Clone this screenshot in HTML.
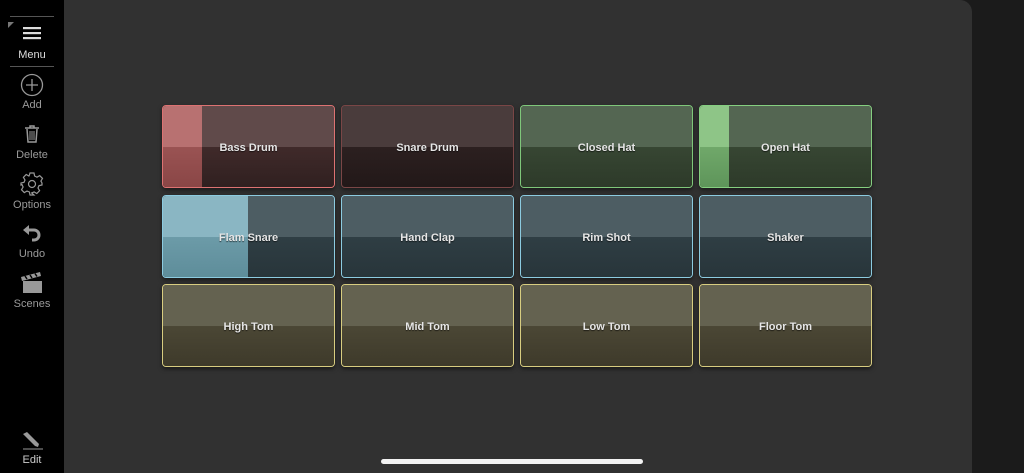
<!DOCTYPE html>
<html><head><meta charset="utf-8"><style>
*{margin:0;padding:0;box-sizing:border-box}
body{width:1024px;height:473px;background:#1b1b1b;position:relative;overflow:hidden;font-family:"Liberation Sans",sans-serif}
#side{position:absolute;left:0;top:0;width:64px;height:473px;background:#000}
#panel{position:absolute;left:64px;top:0;width:908px;height:473px;background:#313131;border-top-right-radius:12px}
.it{position:absolute;left:0;width:64px;text-align:center;color:#9a9a9a;font-size:11px}
.it svg{display:block;margin:0 auto}
.pad{position:absolute;width:173px;height:83px;border-radius:4px;border:1.5px solid;overflow:hidden;box-shadow:0 2px 4px rgba(0,0,0,.5)}
.pad .t{position:absolute;left:0;top:0;right:0;height:50%}
.pad .b{position:absolute;left:0;bottom:0;right:0;height:50%}
.pad .f{position:absolute;left:0;top:0;bottom:0}
.pad .f i{position:absolute;left:0;right:0;height:50%}
.pad span{position:absolute;left:0;right:0;top:36px;text-align:center;color:#e6e6e6;font-weight:bold;font-size:11px;text-shadow:0 1px 1px rgba(0,0,0,.6)}
.hl{position:absolute;left:10px;width:44px;height:1px;background:#555}
</style></head><body>
<div id="side">
<div class="hl" style="top:16px"></div>
<div style="position:absolute;left:8px;top:22px;width:0;height:0;border-top:6px solid #777;border-right:6px solid transparent"></div>
<div class="it" style="top:26px;color:#ddd"><svg width="18" height="14"><rect x="0" y="1" width="18" height="2.2" fill="#ddd"/><rect x="0" y="6" width="18" height="2.2" fill="#ddd"/><rect x="0" y="11" width="18" height="2.2" fill="#ddd"/></svg><div style="margin-top:9px">Menu</div></div>
<div class="hl" style="top:66px"></div>
<div class="it" style="top:73px"><svg width="24" height="24"><circle cx="12" cy="12" r="10.5" fill="none" stroke="#999" stroke-width="1.3"/><path d="M12 6v12M6 12h12" stroke="#999" stroke-width="1.3"/></svg><div style="margin-top:2px">Add</div></div>
<div class="it" style="top:124px"><svg width="16" height="20"><path d="M1 4h14M6 4V2h4v2M3 5l1 13h8l1-13" fill="none" stroke="#999" stroke-width="1.5"/><path d="M6 7v9M8 7v9M10 7v9" stroke="#999" stroke-width="1"/></svg><div style="margin-top:5px">Delete</div></div>
<div class="it" style="top:172px"><svg width="24" height="24" viewBox="0 0 24 24"><path d="M10 1h4l.6 3 2.4 1.2 2.7-1.6 2.8 2.8-1.6 2.7L22 11v2l-3 .6-1 2.4 1.6 2.7-2.8 2.8-2.7-1.6-2.4 1L14 23h-4l-.6-3-2.4-1-2.7 1.6-2.8-2.8L3.1 15 2 12.6 1 13v-2l3-.6 1-2.4-1.6-2.7 2.8-2.8L8.9 4 9.4 3z" fill="none" stroke="#999" stroke-width="1.2"/><circle cx="12" cy="12" r="3.5" fill="none" stroke="#999" stroke-width="1.2"/></svg><div style="margin-top:3px">Options</div></div>
<div class="it" style="top:225px"><svg width="20" height="18"><path d="M6 5h6a5 5 0 0 1 0 10h-2" fill="none" stroke="#999" stroke-width="3"/><path d="M1 5l6-5v10z" fill="#999"/></svg><div style="margin-top:5px">Undo</div></div>
<div class="it" style="top:272px"><svg width="24" height="22"><path d="M3 9h19v12H3z" fill="#999"/><path d="M1 5l19-5 1 4L2 9z" fill="#999"/><path d="M5 4l2 3M10 3l2 3M15 1.5l2 3" stroke="#000" stroke-width="1.5"/></svg><div style="margin-top:4px">Scenes</div></div>
<div class="it" style="top:430px"><svg width="22" height="20"><path d="M4 2l12 12-1 3-3-1L0 4z" fill="#999" transform="translate(2,0)"/><path d="M2 19h20" stroke="#999" stroke-width="1"/></svg><div style="margin-top:4px;color:#ccc">Edit</div></div>
</div>
<div id="panel"></div>

<div class="pad" style="left:162px;top:105px;border-color:#dd7272"><div class="t" style="background:#604a4a"></div><div class="b" style="background:linear-gradient(#402a2a,#302020)"></div><div class="f" style="width:39px"><i style="top:0;background:#b87171"></i><i style="bottom:0;background:linear-gradient(#9a5353,#8a4646)"></i></div><span>Bass Drum</span></div>
<div class="pad" style="left:341px;top:105px;border-color:#7a4646"><div class="t" style="background:#4a3c3c"></div><div class="b" style="background:linear-gradient(#2c2020,#221818)"></div><span>Snare Drum</span></div>
<div class="pad" style="left:520px;top:105px;border-color:#7fc77a"><div class="t" style="background:#546652"></div><div class="b" style="background:linear-gradient(#374633,#2d3a29)"></div><span>Closed Hat</span></div>
<div class="pad" style="left:699px;top:105px;border-color:#85cf80"><div class="t" style="background:#546652"></div><div class="b" style="background:linear-gradient(#374633,#2d3a29)"></div><div class="f" style="width:29px"><i style="top:0;background:#8ec587"></i><i style="bottom:0;background:linear-gradient(#70a86a,#5e955a)"></i></div><span>Open Hat</span></div>

<div class="pad" style="left:162px;top:195px;border-color:#8ccbe0"><div class="t" style="background:#4d5d63"></div><div class="b" style="background:linear-gradient(#2f3e44,#28353a)"></div><div class="f" style="width:85px"><i style="top:0;background:#8ab6c3"></i><i style="bottom:0;background:linear-gradient(#6c9ba8,#5e8d9a)"></i></div><span>Flam Snare</span></div>
<div class="pad" style="left:341px;top:195px;border-color:#8ccbe0"><div class="t" style="background:#4d5d63"></div><div class="b" style="background:linear-gradient(#2f3e44,#28353a)"></div><span>Hand Clap</span></div>
<div class="pad" style="left:520px;top:195px;border-color:#8ccbe0"><div class="t" style="background:#4d5d63"></div><div class="b" style="background:linear-gradient(#2f3e44,#28353a)"></div><span>Rim Shot</span></div>
<div class="pad" style="left:699px;top:195px;border-color:#8ccbe0"><div class="t" style="background:#4d5d63"></div><div class="b" style="background:linear-gradient(#2f3e44,#28353a)"></div><span>Shaker</span></div>

<div class="pad" style="left:162px;top:284px;border-color:#d8cd80"><div class="t" style="background:#646250"></div><div class="b" style="background:linear-gradient(#4b4735,#3e3a2a)"></div><span>High Tom</span></div>
<div class="pad" style="left:341px;top:284px;border-color:#d8cd80"><div class="t" style="background:#646250"></div><div class="b" style="background:linear-gradient(#4b4735,#3e3a2a)"></div><span>Mid Tom</span></div>
<div class="pad" style="left:520px;top:284px;border-color:#d8cd80"><div class="t" style="background:#646250"></div><div class="b" style="background:linear-gradient(#4b4735,#3e3a2a)"></div><span>Low Tom</span></div>
<div class="pad" style="left:699px;top:284px;border-color:#d8cd80"><div class="t" style="background:#646250"></div><div class="b" style="background:linear-gradient(#4b4735,#3e3a2a)"></div><span>Floor Tom</span></div>

<div style="position:absolute;left:381px;top:459px;width:262px;height:5px;border-radius:3px;background:#f2f2f2"></div>
</body></html>
